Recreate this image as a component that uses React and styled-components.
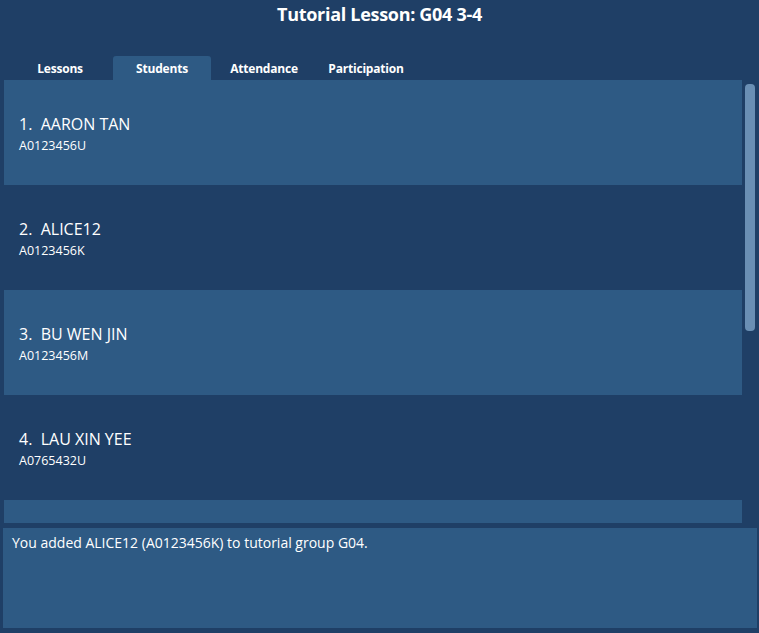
import React from "react";
import styled, { createGlobalStyle } from "styled-components";

const Global = createGlobalStyle`
  html, body { margin: 0; padding: 0; background: #1f3f66; }
  body { font-family: "Open Sans", "Noto Sans", sans-serif; }
`;

const Page = styled.div`
  width: 759px;
  height: 633px;
  background: #1f3f66;
  display: flex;
  flex-direction: column;
  overflow: hidden;
`;

const Title = styled.h1`
  margin: 0;
  height: 56px;
  padding-top: 1px;
  box-sizing: border-box;
  text-align: center;
  color: #ffffff;
  font-size: 18px;
  font-weight: 700;
  letter-spacing: -0.3px;
  line-height: 27px;
`;

const TabBar = styled.div`
  display: flex;
  gap: 4px;
  padding-left: 11px;
  height: 24px;
`;

const Tab = styled.div`
  width: 98px;
  height: 24px;
  display: flex;
  align-items: center;
  justify-content: center;
  padding-top: 1px;
  box-sizing: border-box;
  color: #ffffff;
  font-size: 12px;
  font-weight: 700;
  letter-spacing: -0.2px;
  border-radius: 3px 3px 0 0;
  background: ${(p) => (p.$active ? "#2e5a84" : "transparent")};
`;

const ListPanel = styled.div`
  display: flex;
  height: 443px;
  padding-left: 4px;
`;

const List = styled.div`
  width: 738px;
  height: 443px;
  overflow: hidden;
  display: flex;
  flex-direction: column;
`;

const Card = styled.div`
  flex: none;
  height: 105px;
  box-sizing: border-box;
  padding: 33px 0 0 15px;
  background: ${(p) => (p.$odd ? "#2e5a84" : "#1f3f66")};
  color: #ffffff;
`;

const Name = styled.div`
  font-size: 16px;
  line-height: 23px;
  white-space: pre;
`;

const Matric = styled.div`
  font-size: 12.5px;
  line-height: 18px;
  margin-top: 1px;
`;

const Track = styled.div`
  width: 17px;
  padding: 4px 0 0 3px;
  box-sizing: border-box;
`;

const Thumb = styled.div`
  width: 10px;
  height: 247px;
  border-radius: 4px;
  background: #6a8fb4;
`;

const Result = styled.div`
  margin: 5px 2px 0 3px;
  height: 100px;
  background: #2e5a84;
  color: #ffffff;
  font-size: 14px;
  line-height: 20px;
  padding: 5px 9px;
  box-sizing: border-box;
`;

const students = [
  { name: "AARON TAN", id: "A0123456U" },
  { name: "ALICE12", id: "A0123456K" },
  { name: "BU WEN JIN", id: "A0123456M" },
  { name: "LAU XIN YEE", id: "A0765432U" },
];

const tabs = ["Lessons", "Students", "Attendance", "Participation"];

export default function App() {
  return (
    <Page>
      <Global />
      <Title>Tutorial Lesson: G04 3-4</Title>
      <TabBar>
        {tabs.map((t) => (
          <Tab key={t} $active={t === "Students"}>
            {t}
          </Tab>
        ))}
      </TabBar>
      <ListPanel>
        <List>
          {students.map((s, i) => (
            <Card key={s.id} $odd={i % 2 === 0}>
              <Name>{`${i + 1}.  ${s.name}`}</Name>
              <Matric>{s.id}</Matric>
            </Card>
          ))}
          <Card $odd />
        </List>
        <Track>
          <Thumb />
        </Track>
      </ListPanel>
      <Result>You added ALICE12 (A0123456K) to tutorial group G04.</Result>
    </Page>
  );
}
